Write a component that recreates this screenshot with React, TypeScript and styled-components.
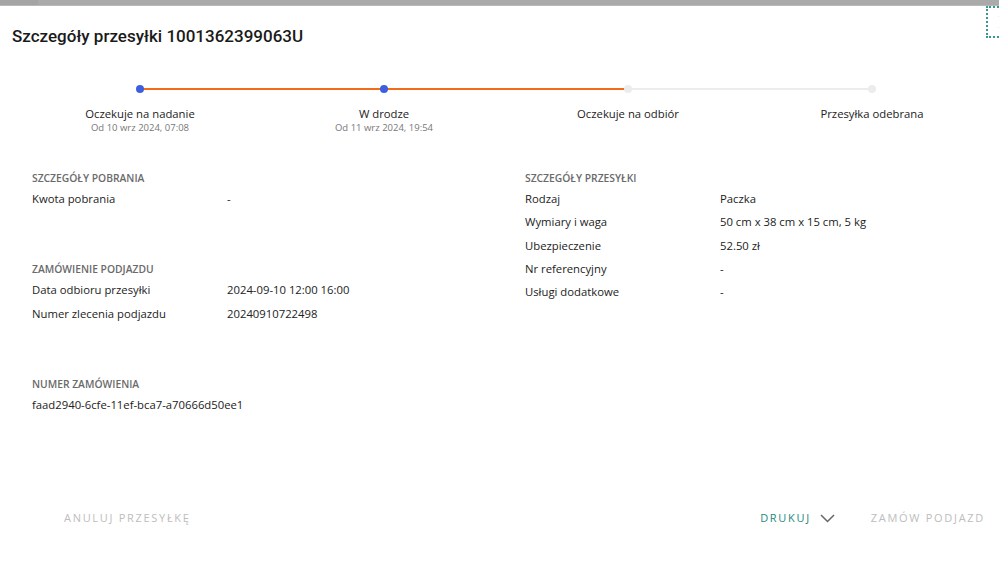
import React from "react";
import styled, { createGlobalStyle } from "styled-components";

const Global = createGlobalStyle`
  html, body { margin: 0; padding: 0; background: #fff; }
  body { font-family: "Open Sans", "Liberation Sans", sans-serif; color: #222; }
  * { box-sizing: border-box; }
`;

const Page = styled.div`
  width: 999px;
  height: 570px;
  overflow: hidden;
  display: flex;
  flex-direction: column;
  background: #fff;
`;

const TopBar = styled.div`
  height: 6px;
  background: #aaa;
  border-bottom: 1px solid #b8b8b8;
  display: flex;
`;

const TopBarTab = styled.div`
  width: 38px;
  background: #a4a4a4;
`;

const Header = styled.div`
  display: flex;
  align-items: flex-start;
  justify-content: space-between;
  height: 60px;
`;

const Title = styled.h1`
  margin: 19px 0 0 12px;
  font-family: Roboto, "Liberation Sans", sans-serif;
  font-weight: 500;
  font-size: 17px;
  line-height: 22px;
  color: #1a1a1a;
`;

const CloseButton = styled.button`
  margin: 0 -20px 0 0;
  width: 33px;
  height: 32px;
  border: 2px dotted #3a9a8a;
  border-right: none;
  background: transparent;
  padding: 0;
  display: flex;
  align-items: center;
  justify-content: flex-start;
  color: #999;
`;

const Stepper = styled.div`
  display: grid;
  grid-template-columns: repeat(4, 244px);
  margin: 19px 0 0 18px;
`;

const Step = styled.div`
  display: flex;
  flex-direction: column;
  align-items: center;
`;

const Track = styled.div`
  position: relative;
  width: 100%;
  height: 8px;
  display: flex;
  align-items: center;
`;

const Half = styled.div<{ $color: string }>`
  flex: 1;
  height: 2px;
  background: ${(p) => p.$color};
`;

const Dot = styled.span<{ $active: boolean }>`
  position: absolute;
  left: 50%;
  top: 50%;
  width: 8px;
  height: 8px;
  margin: -4px 0 0 -4px;
  border-radius: 50%;
  background: ${(p) => (p.$active ? "#3e5ee0" : "#ececec")};
`;

const StepLabel = styled.div`
  margin-top: 13px;
  font-size: 11.3px;
  line-height: 16px;
  color: #222;
`;

const StepDate = styled.div`
  font-size: 9.5px;
  line-height: 12px;
  color: #777;
`;

const Details = styled.div`
  display: grid;
  grid-template-columns: 493px 1fr;
  padding-left: 32px;
  margin-top: 37px;
`;

const Column = styled.div`
  display: flex;
  flex-direction: column;
`;

const Section = styled.section<{ $gap?: number }>`
  margin-bottom: ${(p) => p.$gap ?? 0}px;
`;

const SectionTitle = styled.div`
  font-size: 10.3px;
  font-weight: 600;
  line-height: 14px;
  color: #6a6a6a;
  text-transform: uppercase;
  margin-bottom: 2px;
`;

const Row = styled.div<{ $single?: boolean }>`
  display: grid;
  grid-template-columns: ${(p) => (p.$single ? "1fr" : "195px 1fr")};
  font-size: 11.3px;
  line-height: 23.3px;
  color: #222;
`;

const Footer = styled.div`
  margin-top: auto;
  height: 68px;
  display: flex;
  align-items: flex-start;
  padding: 7px 14px 0 64px;
`;

const TextButton = styled.button<{ $primary?: boolean }>`
  background: none;
  border: none;
  padding: 0;
  font-family: "Open Sans", "Liberation Sans", sans-serif;
  font-size: 11px;
  font-weight: ${(p) => (p.$primary ? 500 : 400)};
  letter-spacing: 1.7px;
  text-transform: uppercase;
  color: ${(p) => (p.$primary ? "#1e8a7c" : "#bdbdbd")};
  display: flex;
  align-items: center;
  gap: 9px;
  line-height: 18px;
`;

const SecondaryGroup = styled.div`
  display: flex;
  align-items: flex-start;
  gap: 36px;
`;

const Spacer = styled.div`
  flex: 1;
`;

const steps = [
  { label: "Oczekuje na nadanie", date: "Od 10 wrz 2024, 07:08", active: true },
  { label: "W drodze", date: "Od 11 wrz 2024, 19:54", active: true },
  { label: "Oczekuje na odbiór", date: "", active: false },
  { label: "Przesyłka odebrana", date: "", active: false },
];
const ORANGE = "#f26b1d";
const GREY = "#ececec";
const segColors = [ORANGE, ORANGE, GREY];

export default function App() {
  return (
    <Page>
      <Global />
      <TopBar>
        <TopBarTab />
      </TopBar>
      <Header>
        <Title>Szczegóły przesyłki 1001362399063U</Title>
        <CloseButton aria-label="Zamknij">
          <svg width="16" height="16" viewBox="0 0 16 16" style={{ marginLeft: 9 }}>
            <path d="M2 2 L14 14 M14 2 L2 14" stroke="#aaa" strokeWidth="1.5" />
          </svg>
        </CloseButton>
      </Header>
      <Stepper>
        {steps.map((s, i) => (
          <Step key={s.label}>
            <Track>
              <Half $color={i > 0 ? segColors[i - 1] : "transparent"} />
              <Half $color={i < 3 ? segColors[i] : "transparent"} />
              <Dot $active={s.active} />
            </Track>
            <StepLabel>{s.label}</StepLabel>
            {s.date && <StepDate>{s.date}</StepDate>}
          </Step>
        ))}
      </Stepper>
      <Details>
        <Column>
          <Section $gap={52}>
            <SectionTitle>Szczegóły pobrania</SectionTitle>
            <Row><span>Kwota pobrania</span><span>-</span></Row>
          </Section>
          <Section $gap={52}>
            <SectionTitle>Zamówienie podjazdu</SectionTitle>
            <Row><span>Data odbioru przesyłki</span><span>2024-09-10 12:00 16:00</span></Row>
            <Row><span>Numer zlecenia podjazdu</span><span>20240910722498</span></Row>
          </Section>
          <Section>
            <SectionTitle>Numer zamówienia</SectionTitle>
            <Row $single><span>faad2940-6cfe-11ef-bca7-a70666d50ee1</span></Row>
          </Section>
        </Column>
        <Column>
          <Section>
            <SectionTitle>Szczegóły przesyłki</SectionTitle>
            <Row><span>Rodzaj</span><span>Paczka</span></Row>
            <Row><span>Wymiary i waga</span><span>50 cm x 38 cm x 15 cm, 5 kg</span></Row>
            <Row><span>Ubezpieczenie</span><span>52.50 zł</span></Row>
            <Row><span>Nr referencyjny</span><span>-</span></Row>
            <Row><span>Usługi dodatkowe</span><span>-</span></Row>
          </Section>
        </Column>
      </Details>
      <Footer>
        <TextButton>Anuluj przesyłkę</TextButton>
        <Spacer />
        <SecondaryGroup>
          <TextButton $primary>
            Drukuj
            <svg width="15" height="9" viewBox="0 0 15 9">
              <path d="M1 1 L7.5 7.5 L14 1" fill="none" stroke="#666" strokeWidth="1.5" />
            </svg>
          </TextButton>
          <TextButton>Zamów podjazd</TextButton>
        </SecondaryGroup>
      </Footer>
    </Page>
  );
}
